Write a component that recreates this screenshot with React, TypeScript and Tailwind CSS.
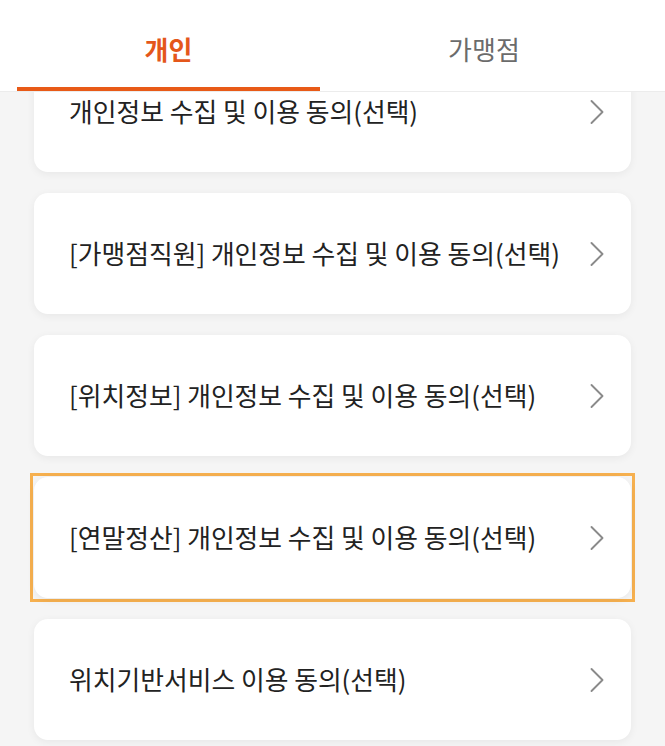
const items = [
  { label: '개인정보 수집 및 이용 동의(선택)' },
  { label: '[가맹점직원] 개인정보 수집 및 이용 동의(선택)' },
  { label: '[위치정보] 개인정보 수집 및 이용 동의(선택)' },
  { label: '[연말정산] 개인정보 수집 및 이용 동의(선택)', focused: true },
  { label: '위치기반서비스 이용 동의(선택)' },
]

function Chevron() {
  return (
    <svg width="16" height="26" viewBox="0 0 16 26" fill="none" className="shrink-0">
      <polyline points="2.5,2 13.5,13 2.5,24" stroke="#8a8a8a" strokeWidth="1.9" strokeLinecap="round" strokeLinejoin="round" />
    </svg>
  )
}

function Card({ label }: { label: string }) {
  return (
    <div className="h-[121px] bg-white rounded-[14px] shadow-[0_2px_8px_rgba(0,0,0,0.06)] flex items-center justify-between pl-[35px] pr-[26px]">
      <span className="text-[25.8px] text-[#222]">{label}</span>
      <Chevron />
    </div>
  )
}

export default function App() {
  return (
    <div
      className="h-[746px] w-full flex flex-col overflow-hidden bg-[#f5f5f5]"
      style={{ fontFamily: '"Noto Sans CJK KR", "Noto Sans", sans-serif' }}
    >
      <div className="relative z-10 h-[92px] shrink-0 bg-white flex px-[17px] border-b border-[#ececec]">
        <div className="w-[303px] flex flex-col">
          <div className="flex-1 flex items-center justify-center pt-[10px] text-[26px] font-bold text-[#e4571b]">개인</div>
          <div className="h-[4px] bg-[#e85a17]" />
        </div>
        <div className="flex-1 flex items-center justify-center pt-[6px] text-[26px] text-[#6b6b6b]">가맹점</div>
      </div>
      <div className="flex-1 overflow-hidden">
        <div className="-mt-[41px] px-[34px] flex flex-col gap-[21px]">
          {items.map(item =>
            item.focused ? (
              <div key={item.label} className="-mx-[4px] -my-[4px] border-[3px] border-[#f6b04f] p-px">
                <Card label={item.label} />
              </div>
            ) : (
              <Card key={item.label} label={item.label} />
            )
          )}
        </div>
      </div>
    </div>
  )
}
